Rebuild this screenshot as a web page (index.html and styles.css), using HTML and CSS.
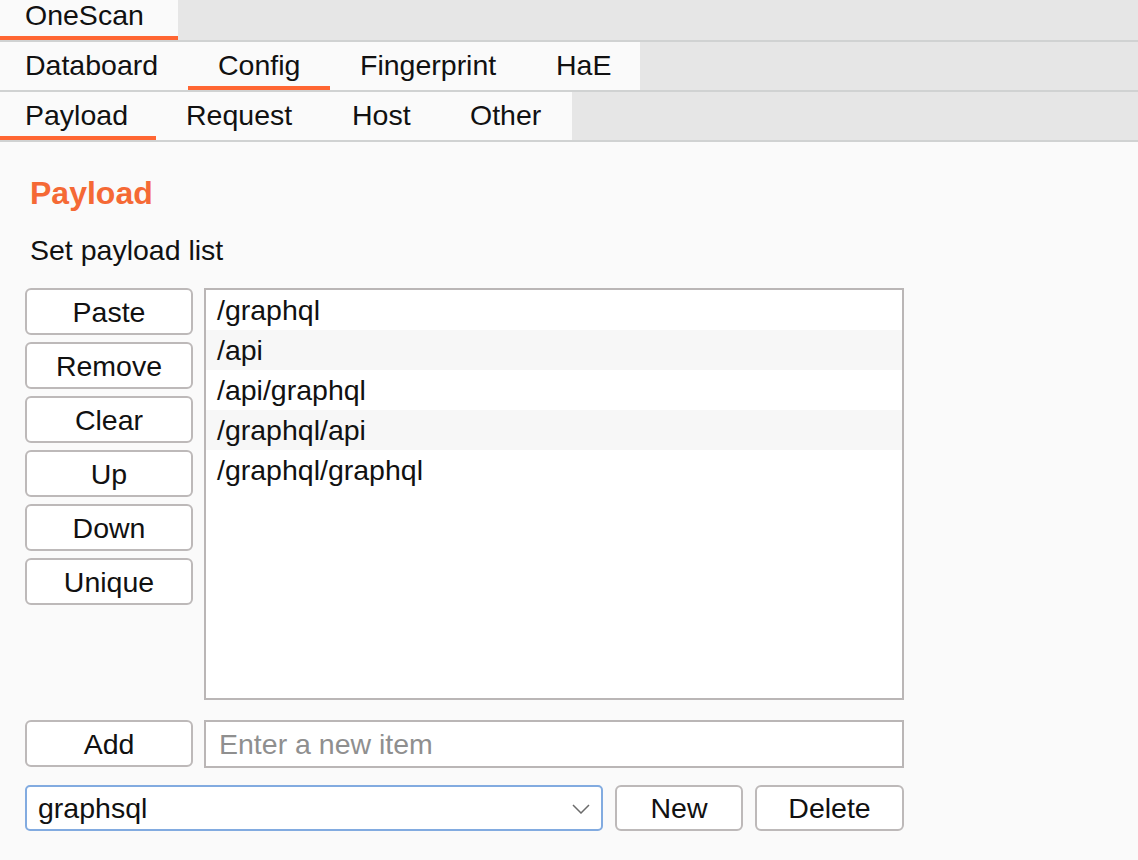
FILE: index.html
```html
<!DOCTYPE html>
<html lang="en">
<head>
<meta charset="utf-8">
<title>OneScan - Payload</title>
<link rel="stylesheet" href="styles.css">
</head>
<body>
<nav class="tabbar tabbar-top">
  <div class="tab tab-first tab-onescan active">OneScan</div>
</nav>
<nav class="tabbar">
  <div class="tab tab-first w-databoard">Databoard</div>
  <div class="tab w-config active">Config</div>
  <div class="tab w-fingerprint">Fingerprint</div>
  <div class="tab w-hae">HaE</div>
</nav>
<nav class="tabbar">
  <div class="tab tab-first w-payload active">Payload</div>
  <div class="tab w-request">Request</div>
  <div class="tab w-host">Host</div>
  <div class="tab w-other">Other</div>
</nav>
<main class="content">
  <h1 class="title">Payload</h1>
  <p class="subtitle">Set payload list</p>
  <div class="editor">
    <div class="btn-col">
      <button class="btn">Paste</button>
      <button class="btn">Remove</button>
      <button class="btn">Clear</button>
      <button class="btn">Up</button>
      <button class="btn">Down</button>
      <button class="btn">Unique</button>
    </div>
    <ul class="list">
      <li class="item">/graphql</li>
      <li class="item">/api</li>
      <li class="item">/api/graphql</li>
      <li class="item">/graphql/api</li>
      <li class="item">/graphql/graphql</li>
    </ul>
    <button class="btn btn-add">Add</button>
    <div class="input"><span class="placeholder">Enter a new item</span></div>
  </div>
  <div class="select-row">
    <div class="select">
      <span class="select-value">graphsql</span>
      <svg class="chevron" width="18" height="10" viewBox="0 0 18 10"><path d="M1 1 L9 9 L17 1" fill="none" stroke="#6b6b6b" stroke-width="1.5"/></svg>
    </div>
    <button class="btn btn-new">New</button>
    <button class="btn btn-delete">Delete</button>
  </div>
</main>
</body>
</html>
```
FILE: styles.css
```css
html, body {
  margin: 0;
  padding: 0;
}
body {
  background: #fafafa;
  font-family: "Liberation Sans", Arial, Helvetica, sans-serif;
  font-size: 28.5px;
  color: #111;
  width: 1138px;
  height: 860px;
  overflow: hidden;
}

/* ---------- tabs ---------- */
.tabbar {
  display: flex;
  height: 48px;
  background: #e6e6e6;
  border-bottom: 2px solid #d0d2d2;
}
.tabbar-top {
  height: 40px;
}
.tab {
  box-sizing: border-box;
  height: 100%;
  padding: 6px 0 0 30px;
  line-height: 34px;
  background: #fafafa;
  color: #111;
  white-space: nowrap;
}
.tab-first {
  padding-left: 25px;
}
.tabbar-top .tab {
  padding-top: 0;
  line-height: 30px;
}
.tab.active {
  box-shadow: inset 0 -4px 0 #ff6633;
}
.tab-onescan { width: 178px; }
.w-databoard { width: 188px; }
.w-config { width: 142px; }
.w-fingerprint { width: 196px; }
.w-hae { width: 114px; }
.w-payload { width: 156px; }
.w-request { width: 166px; }
.w-host { width: 118px; }
.w-other { width: 132px; }

/* ---------- content ---------- */
.content {
  padding: 33px 0 0 25px;
  width: 879px;
}
.title {
  margin: 0 0 0 5px;
  font-size: 32px;
  line-height: 36px;
  font-weight: bold;
  color: #f56935;
}
.subtitle {
  margin: 23px 0 0 5px;
  font-size: 28.5px;
  line-height: 33px;
}

.editor {
  margin-top: 21px;
  display: grid;
  grid-template-columns: 168px 1fr;
  column-gap: 11px;
  row-gap: 20px;
  align-items: start;
}
.btn-col {
  display: flex;
  flex-direction: column;
  gap: 7px;
}
.btn {
  box-sizing: border-box;
  height: 47px;
  margin: 0;
  padding: 1px 0 0 0;
  border: 2px solid #bdb9b9;
  border-radius: 6px;
  background: #fff;
  font-family: inherit;
  font-size: 28.5px;
  line-height: 42px;
  color: #111;
  text-align: center;
}

.list {
  box-sizing: border-box;
  height: 412px;
  margin: 0;
  padding: 0;
  list-style: none;
  border: 2px solid #bab6b6;
  background: #fff;
}
.item {
  height: 40px;
  padding-left: 11px;
  line-height: 40px;
}
.item:nth-child(even) {
  background: #f7f7f7;
}

.input {
  box-sizing: border-box;
  height: 48px;
  border: 2px solid #bab6b6;
  background: #fff;
  padding-left: 13px;
  line-height: 44px;
}
.placeholder {
  color: #8f8f8f;
}

.select-row {
  margin-top: 17px;
  display: flex;
  gap: 12px;
}
.select {
  box-sizing: border-box;
  flex: 1;
  height: 46px;
  display: flex;
  align-items: center;
  justify-content: space-between;
  border: 2px solid #82abe0;
  border-radius: 5px;
  background: #fff;
  padding: 0 11px 0 11px;
  line-height: 42px;
}
.chevron {
  display: block;
  margin-top: 1px;
}
.btn-new {
  width: 128px;
  height: 46px;
  line-height: 41px;
}
.btn-delete {
  width: 149px;
  height: 46px;
  line-height: 41px;
}
```
